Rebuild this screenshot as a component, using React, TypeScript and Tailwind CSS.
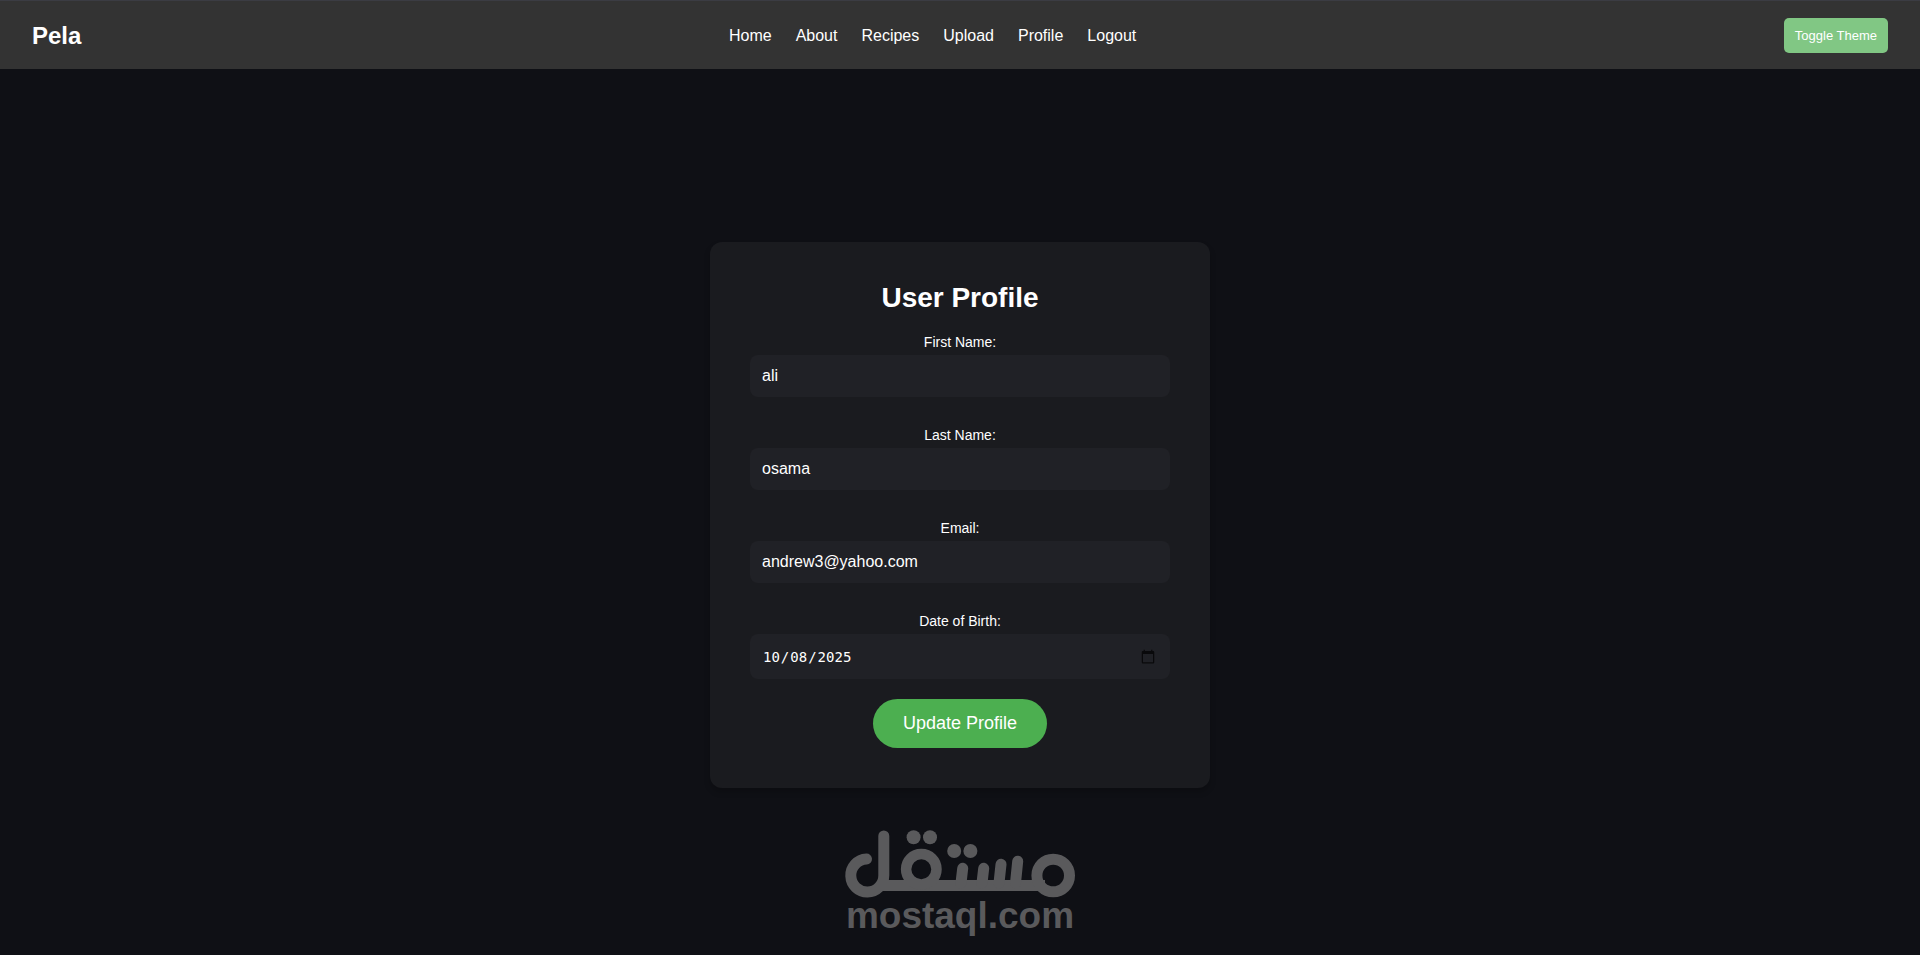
import React from 'react';

const NAV_ITEMS = ['Home', 'About', 'Recipes', 'Upload', 'Profile', 'Logout'];

const FIELDS = [
  { id: 'firstName', label: 'First Name:', type: 'text', value: 'ali' },
  { id: 'lastName', label: 'Last Name:', type: 'text', value: 'osama' },
  { id: 'email', label: 'Email:', type: 'email', value: 'andrew3@yahoo.com' },
];

const Navbar: React.FC = () => (
  <header className="flex items-center justify-between border-t border-[#3b3c43] bg-[#333333] px-8 pt-[17px] pb-4">
    <a href="#" className="text-2xl leading-8 font-bold">Pela</a>
    <nav>
      <ul className="flex gap-6">
        {NAV_ITEMS.map((item) => (
          <li key={item}>
            <a href="#" className="hover:underline">{item}</a>
          </li>
        ))}
      </ul>
    </nav>
    <button
      type="button"
      className="rounded-[5px] bg-[#81c784] px-[11px] py-2 text-[13px] leading-[19px]"
    >
      Toggle Theme
    </button>
  </header>
);

const ProfileForm: React.FC = () => (
  <form className="w-full max-w-[500px] rounded-xl bg-[#1a1b1f] p-10 text-center shadow-[0_4px_6px_rgba(0,0,0,0.2)]">
    <h1 className="mb-5 text-[28px] leading-8 font-bold">User Profile</h1>

    {FIELDS.map((field) => (
      <div key={field.id} className="mb-7.5">
        <label htmlFor={field.id} className="mb-[5px] block text-sm leading-4">{field.label}</label>
        <input
          id={field.id}
          type={field.type}
          defaultValue={field.value}
          className="block w-full rounded-lg bg-[#202126] px-3 py-3 text-base leading-4.5 outline-none"
        />
      </div>
    ))}

    <div className="mb-5">
      <label htmlFor="dob" className="mb-[5px] block text-sm leading-4">Date of Birth:</label>
      <input
        id="dob"
        type="date"
        defaultValue="2025-10-08"
        className="block h-[45px] w-full rounded-lg bg-[#202126] px-3 font-['DejaVu_Sans_Mono',monospace] text-sm outline-none [&::-webkit-calendar-picker-indicator]:text-base [&::-webkit-calendar-picker-indicator]:opacity-70"
      />
    </div>

    <button type="submit" className="rounded-full bg-[#4caf50] px-7.5 py-3.5 text-lg leading-[21px]">
      Update Profile
    </button>
  </form>
);

// 下部のロゴ
const Logo: React.FC = () => (
  <footer className="mt-[42px] flex flex-col items-center text-[#5a5a5c]">
    <svg viewBox="0 0 230 68" className="h-[68px] w-[230px]" fill="none" stroke="currentColor" strokeWidth="11" strokeLinecap="round" aria-hidden="true">
      <path d="M21.5 29A16.5 16.5 0 1 0 38.8 45.5V6" />
      <path d="M35 55.5H200" strokeLinecap="butt" />
      <circle cx="76.3" cy="39.2" r="15.2" strokeWidth="10.5" />
      <circle cx="208.2" cy="45.5" r="16.3" />
      <path d="M117.7 38.3L116 53M138.7 38.3L137 53M156 34.3L154 53M172.7 31.3L170.5 53" />
      <g fill="currentColor" stroke="none">
        <circle cx="68.6" cy="7.2" r="7" />
        <circle cx="85" cy="7.2" r="7" />
        <circle cx="109.2" cy="21" r="7" />
        <circle cx="125.4" cy="21" r="7" />
      </g>
    </svg>
    <span className="text-[37px] leading-9 font-bold">mostaql.com</span>
  </footer>
);

const App: React.FC = () => {
  return (
    <div className="flex min-h-screen flex-col bg-[#0f1015] font-['Liberation_Sans',Arial,sans-serif] text-white">
      <Navbar />
      <main className="flex grow flex-col items-center pt-[173px]">
        <ProfileForm />
        <Logo />
      </main>
    </div>
  );
};

export default App;
